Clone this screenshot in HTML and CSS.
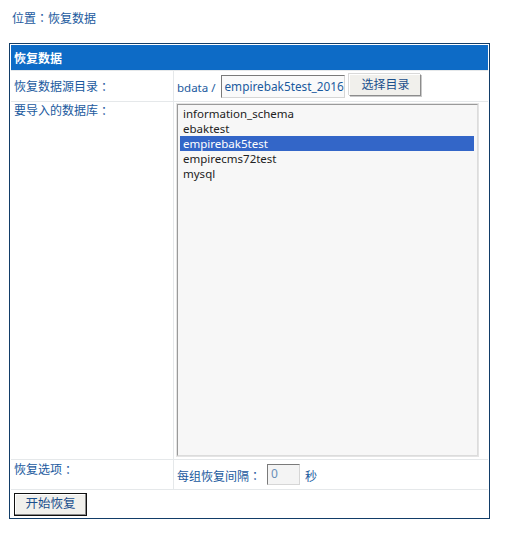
FILE: index.html
```html
<!DOCTYPE html>
<html>
<head>
<meta charset="utf-8">
<link rel="stylesheet" href="styles.css">
</head>
<body>
<div class="crumb">位置<span class="colon">：</span>恢复数据</div>
<div class="panel">
  <div class="grid">
    <div class="head">恢复数据</div>
    <div class="label mid">恢复数据源目录<span class="colon">：</span></div>
    <div class="value mid">
      <span class="path latin">bdata /</span>
      <span class="field dir">empirebak5test_2016</span>
      <span class="btn pick">选择目录</span>
    </div>
    <div class="label top">要导入的数据库<span class="colon">：</span></div>
    <div class="value top">
      <div class="listbox">
        <div class="opt">information_schema</div>
        <div class="opt">ebaktest</div>
        <div class="opt sel">empirebak5test</div>
        <div class="opt">empirecms72test</div>
        <div class="opt">mysql</div>
      </div>
    </div>
    <div class="label top opts">恢复选项<span class="colon">：</span></div>
    <div class="value mid">
      <span class="path">每组恢复间隔<span class="colon">：</span></span>
      <span class="field num">0</span>
      <span class="path sec">秒</span>
    </div>
    <div class="foot"><span class="btn start">开始恢复</span></div>
  </div>
</div>
</body>
</html>
```

FILE: styles.css
```css
html, body {
  margin: 0;
  padding: 0;
  background: #ffffff;
}
body {
  font-family: "Noto Sans", "Noto Sans CJK SC", sans-serif;
  font-size: 12px;
  color: #1b5a9e;
}
.colon {
  font-family: "Noto Sans CJK JP", sans-serif;
}
.latin {
  font-size: 11.5px;
}
.crumb {
  padding: 10px 0 0 12px;
  height: 43px;
  box-sizing: border-box;
  line-height: 16px;
}
.panel {
  margin-left: 9px;
  width: 481px;
  height: 476px;
  box-sizing: border-box;
  border: 1px solid #123d68;
  padding: 1px;
  background: #fff;
}
.grid {
  display: grid;
  grid-template-columns: 162px 314px;
  grid-template-rows: 25px 30px 357px 29px 27px;
  gap: 1px;
  background: #e5e8ea;
}
.head {
  grid-column: 1 / 3;
  background: #0d6bc6;
  color: #fff;
  font-weight: bold;
  padding-left: 3px;
  display: flex;
  align-items: center;
}
.label, .value, .foot {
  background: #fff;
  display: flex;
}
.label {
  padding-left: 3px;
}
.mid { align-items: center; }
.top { align-items: flex-start; }
.label.top { padding-top: 1px; line-height: 16px; }
.label.opts { padding-top: 2px; }
.value { padding-left: 3px; }
.value.top { padding-top: 2px; }
.path {
  margin-top: 2px;
}
.field {
  display: inline-block;
  box-sizing: border-box;
  border: 1px solid;
  border-color: #7a7a7a #d6d6d6 #d6d6d6 #7a7a7a;
  background: #fafafa;
  overflow: hidden;
  white-space: nowrap;
  color: #1b5a9e;
}
.dir {
  margin-left: 6px;
  width: 124px;
  height: 23px;
  line-height: 20px;
  padding-left: 2px;
  font-size: 11.8px;
}
.btn {
  display: inline-block;
  box-sizing: border-box;
  text-align: center;
  background: #f1f0ec;
  color: #1b4f8c;
  border: 1px solid;
  border-color: #ffffff #8c8c8c #8c8c8c #ffffff;
  box-shadow: 1px 1px 0 #c9c9c9, -1px -1px 0 #d9d9d9;
}
.pick {
  margin-left: 4px;
  width: 72px;
  height: 22px;
  line-height: 19px;
  margin-top: -2px;
}
.listbox {
  width: 301px;
  height: 352px;
  box-sizing: border-box;
  border: 1px solid #9a9a9a;
  border-right-color: #dcdcdc;
  border-bottom-color: #dcdcdc;
  outline: 1px solid #e4e4e4;
  background: #f7f7f7;
  padding: 1px 2px 0 2px;
  line-height: 15px;
  font-size: 11.5px;
}
.opt {
  padding-left: 3px;
  color: #222;
  height: 15px;
}
.opt.sel {
  background: #3366c8;
  color: #fff;
  margin-right: 1px;
}
.num {
  margin-left: 6px;
  width: 33px;
  height: 21px;
  line-height: 18px;
  padding-left: 3px;
  background: #f4f4f4;
  color: #6a8fb8;
}
.sec { margin-left: 5px; }
.foot {
  grid-column: 1 / 3;
  padding: 3px 0 0 3px;
}
.start {
  width: 73px;
  height: 23px;
  line-height: 19px;
  border: 1px solid #111;
  box-shadow: inset -1px -1px 0 #8c8c8c, inset 1px 1px 0 #fff;
  font-size: 12.5px;
}
```
